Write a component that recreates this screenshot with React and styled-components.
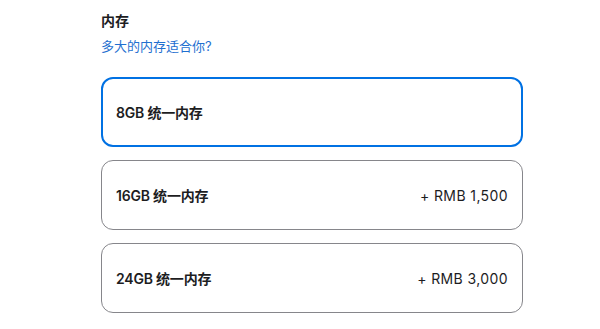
import styled, { createGlobalStyle } from 'styled-components'

const GlobalStyle = createGlobalStyle`
  body {
    margin: 0;
    background: #fff;
    font-family: Inter, "Noto Sans CJK SC", sans-serif;
    color: #1d1d1f;
  }
`

const Section = styled.section`
  width: 422px;
  margin-left: 101px;
  padding-top: 11px;
`

const Title = styled.h3`
  margin: 0;
  font-size: 14px;
  line-height: 20px;
  font-weight: 700;
`

const HelpLink = styled.a`
  display: block;
  margin-top: 6px;
  font-size: 13px;
  line-height: 18px;
  color: #1f6fd0;
  text-decoration: none;
`

const Options = styled.div`
  display: flex;
  flex-direction: column;
  gap: 13px;
  margin-top: 22px;
`

const Option = styled.div`
  box-sizing: border-box;
  height: 70px;
  display: flex;
  align-items: center;
  justify-content: space-between;
  padding: 0 14px 0 ${p => (p.$selected ? 13 : 14)}px;
  border-radius: 12px;
  border: ${p => (p.$selected ? '2px solid #0071e3' : '1px solid #86868b')};
  font-size: 14px;
`

const Label = styled.span`
  font-weight: 600;
  letter-spacing: -0.2px;
`

const Price = styled.span`
  font-weight: 400;
  letter-spacing: 0.4px;
`

const options = [
  { label: '8GB 统一内存', price: null },
  { label: '16GB 统一内存', price: '+ RMB 1,500' },
  { label: '24GB 统一内存', price: '+ RMB 3,000' },
]

export default function App() {
  return (
    <>
      <GlobalStyle />
      <Section>
        <Title>内存</Title>
        <HelpLink href="#">多大的内存适合你?</HelpLink>
        <Options>
          {options.map((o, i) => (
            <Option key={o.label} $selected={i === 0}>
              <Label>{o.label}</Label>
              {o.price && <Price>{o.price}</Price>}
            </Option>
          ))}
        </Options>
      </Section>
    </>
  )
}
